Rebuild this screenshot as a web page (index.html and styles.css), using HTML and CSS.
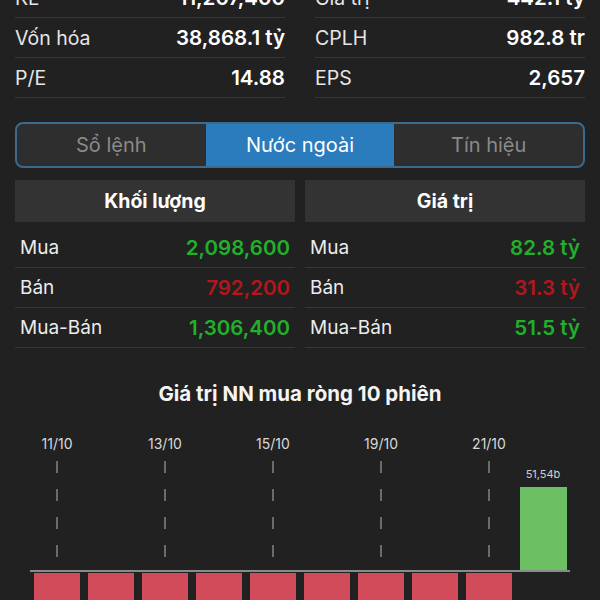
FILE: index.html
```html
<!DOCTYPE html>
<html>
<head>
    <title>Chi tiết cổ phiếu</title>
    <link rel="stylesheet" href="styles.css">
</head>
<body>
    <div class="screen">
        <div class="stats">
            <div class="stat-col">
                <div class="stat-row"><span class="label">KL</span><span class="value">11,207,400</span></div>
                <div class="stat-row"><span class="label">Vốn hóa</span><span class="value">38,868.1 tỷ</span></div>
                <div class="stat-row"><span class="label">P/E</span><span class="value">14.88</span></div>
            </div>
            <div class="stat-col">
                <div class="stat-row"><span class="label">Giá trị</span><span class="value">442.1 tỷ</span></div>
                <div class="stat-row"><span class="label">CPLH</span><span class="value">982.8 tr</span></div>
                <div class="stat-row"><span class="label">EPS</span><span class="value">2,657</span></div>
            </div>
        </div>

        <div class="tabs">
            <div class="tab">Sổ lệnh</div>
            <div class="tab active">Nước ngoài</div>
            <div class="tab">Tín hiệu</div>
        </div>

        <div class="foreign">
            <div class="foreign-col">
                <div class="foreign-head">Khối lượng</div>
                <div class="foreign-row"><span class="label">Mua</span><span class="num up">2,098,600</span></div>
                <div class="foreign-row"><span class="label">Bán</span><span class="num down">792,200</span></div>
                <div class="foreign-row"><span class="label">Mua-Bán</span><span class="num up">1,306,400</span></div>
            </div>
            <div class="foreign-col">
                <div class="foreign-head">Giá trị</div>
                <div class="foreign-row"><span class="label">Mua</span><span class="num up">82.8 tỷ</span></div>
                <div class="foreign-row"><span class="label">Bán</span><span class="num down">31.3 tỷ</span></div>
                <div class="foreign-row"><span class="label">Mua-Bán</span><span class="num up">51.5 tỷ</span></div>
            </div>
        </div>

        <div class="chart">
            <div class="chart-title">Giá trị NN mua ròng 10 phiên</div>
            <div class="plot">
                <div class="slot">
                    <div class="upper"><span class="date">11/10</span><span class="dash"></span></div>
                    <div class="lower"><div class="bar neg" style="height: 40px"></div></div>
                </div>
                <div class="slot">
                    <div class="upper"></div>
                    <div class="lower"><div class="bar neg" style="height: 40px"></div></div>
                </div>
                <div class="slot">
                    <div class="upper"><span class="date">13/10</span><span class="dash"></span></div>
                    <div class="lower"><div class="bar neg" style="height: 40px"></div></div>
                </div>
                <div class="slot">
                    <div class="upper"></div>
                    <div class="lower"><div class="bar neg" style="height: 40px"></div></div>
                </div>
                <div class="slot">
                    <div class="upper"><span class="date">15/10</span><span class="dash"></span></div>
                    <div class="lower"><div class="bar neg" style="height: 40px"></div></div>
                </div>
                <div class="slot">
                    <div class="upper"></div>
                    <div class="lower"><div class="bar neg" style="height: 40px"></div></div>
                </div>
                <div class="slot">
                    <div class="upper"><span class="date">19/10</span><span class="dash"></span></div>
                    <div class="lower"><div class="bar neg" style="height: 40px"></div></div>
                </div>
                <div class="slot">
                    <div class="upper"></div>
                    <div class="lower"><div class="bar neg" style="height: 40px"></div></div>
                </div>
                <div class="slot">
                    <div class="upper"><span class="date">21/10</span><span class="dash"></span></div>
                    <div class="lower"><div class="bar neg" style="height: 40px"></div></div>
                </div>
                <div class="slot">
                    <div class="upper">
                        <span class="bar-value">51,54b</span>
                        <div class="bar pos" style="height: 83px"></div>
                    </div>
                    <div class="lower"></div>
                </div>
            </div>
        </div>
    </div>
</body>
</html>
```

FILE: styles.css
```css
body {
    font-family: Inter, 'Noto Sans', sans-serif;
    background: #212121;
    color: #f2f2f2;
    margin: 0;
    padding: 0;
    overflow: hidden;
}
.screen {
    margin-top: -22px;
    padding: 0 15px;
}

/* quick stats */
.stats {
    display: grid;
    grid-template-columns: 270px 270px;
    column-gap: 30px;
}
.stat-row {
    display: flex;
    justify-content: space-between;
    align-items: center;
    height: 39px;
    border-bottom: 1px solid #363636;
    font-size: 19.5px;
}
.stat-row .label {
    color: #e6e6e6;
}
.stat-row .value {
    font-size: 20.5px;
    font-weight: 600;
    color: #fff;
}

/* segmented tabs */
.tabs {
    display: grid;
    grid-template-columns: 1fr 1fr 1fr;
    margin-top: 24px;
    height: 42px;
    border: 2px solid #3b6a8c;
    border-radius: 8px;
    overflow: hidden;
    background: #2e2e2e;
}
.tab {
    display: flex;
    align-items: center;
    justify-content: center;
    font-size: 20px;
    color: #8a8a8a;
}
.tab.active {
    background: #2a7cbc;
    color: #fff;
}

/* foreign trading */
.foreign {
    display: grid;
    grid-template-columns: 1fr 1fr;
    column-gap: 10px;
    margin-top: 12px;
}
.foreign-head {
    height: 42px;
    display: flex;
    align-items: center;
    justify-content: center;
    background: #333333;
    font-size: 19.5px;
    font-weight: 700;
    color: #fff;
    margin-bottom: 6px;
}
.foreign-row {
    display: flex;
    justify-content: space-between;
    align-items: center;
    height: 39px;
    padding: 0 5px;
    border-bottom: 1px solid #363636;
    font-size: 19px;
}
.foreign-row .label {
    color: #ececec;
}
.num {
    font-size: 20.5px;
    font-weight: 600;
}
.num.up {
    color: #22b02c;
}
.num.down {
    color: #b3161d;
}

/* net buy chart */
.chart-title {
    margin-top: 34px;
    line-height: 24px;
    text-align: center;
    font-size: 20.5px;
    font-weight: 700;
    color: #f4f4f4;
}
.plot {
    display: flex;
    width: 540px;
    margin: 23px auto 0 auto;
}
.slot {
    width: 54px;
    display: flex;
    flex-direction: column;
}
.upper {
    height: 141px;
    display: flex;
    flex-direction: column;
    justify-content: flex-end;
    align-items: center;
}
.date {
    font-size: 14px;
    line-height: 18px;
    color: #d8d8d8;
}
.dash {
    width: 2px;
    height: 98px;
    margin: 8px 0 11px 0;
    background: repeating-linear-gradient(to bottom, #6a6a6a 0 12px, transparent 12px 28px);
}
.lower {
    height: 60px;
    border-top: 2px solid #8a8a8a;
    display: flex;
    justify-content: center;
}
.bar {
    width: 46px;
}
.bar.neg {
    background: #d14b5b;
    margin-top: 1px;
}
.bar.pos {
    width: 47px;
    background: #6cc063;
}
.bar-value {
    font-size: 11px;
    line-height: 14px;
    color: #d0d0d0;
    margin-bottom: 6px;
}
```
